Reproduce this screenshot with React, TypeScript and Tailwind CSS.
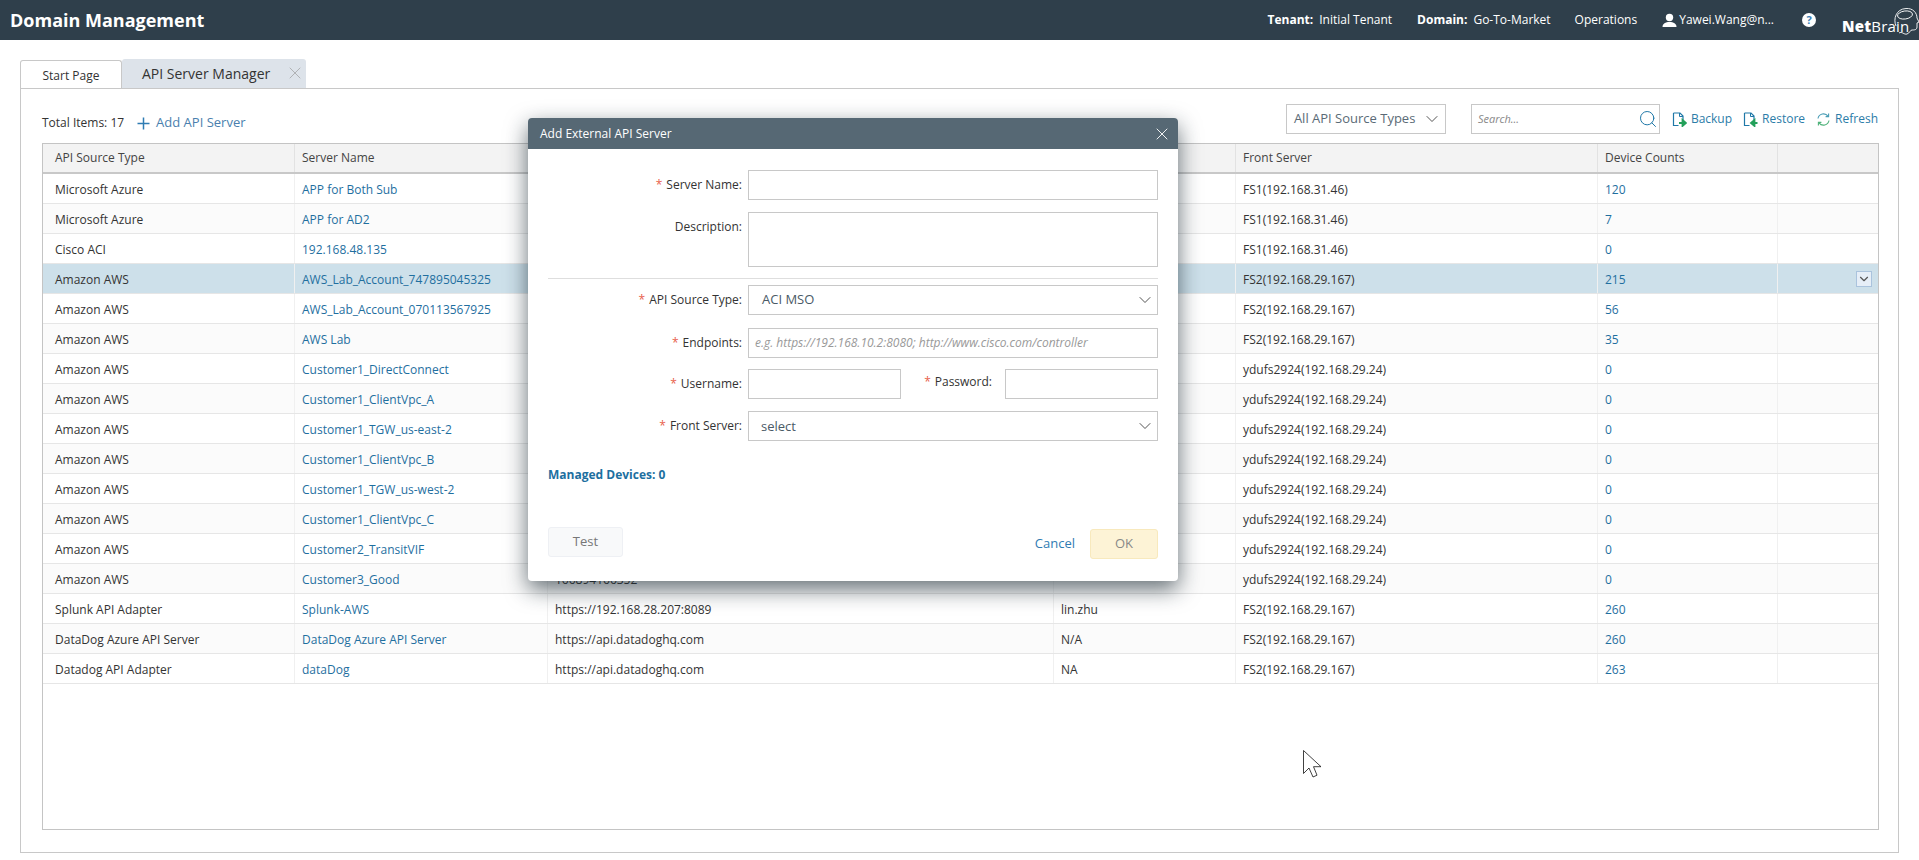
import { ChevronDown, Search, X } from "lucide-react";

const ROWS = [
	["Microsoft Azure", "APP for Both Sub", "", "", "FS1(192.168.31.46)", "120"],
	["Microsoft Azure", "APP for AD2", "", "", "FS1(192.168.31.46)", "7"],
	["Cisco ACI", "192.168.48.135", "", "", "FS1(192.168.31.46)", "0"],
	["Amazon AWS", "AWS_Lab_Account_747895045325", "", "", "FS2(192.168.29.167)", "215"],
	["Amazon AWS", "AWS_Lab_Account_070113567925", "", "", "FS2(192.168.29.167)", "56"],
	["Amazon AWS", "AWS Lab", "", "", "FS2(192.168.29.167)", "35"],
	["Amazon AWS", "Customer1_DirectConnect", "", "", "ydufs2924(192.168.29.24)", "0"],
	["Amazon AWS", "Customer1_ClientVpc_A", "", "", "ydufs2924(192.168.29.24)", "0"],
	["Amazon AWS", "Customer1_TGW_us-east-2", "", "", "ydufs2924(192.168.29.24)", "0"],
	["Amazon AWS", "Customer1_ClientVpc_B", "", "", "ydufs2924(192.168.29.24)", "0"],
	["Amazon AWS", "Customer1_TGW_us-west-2", "", "", "ydufs2924(192.168.29.24)", "0"],
	["Amazon AWS", "Customer1_ClientVpc_C", "", "", "ydufs2924(192.168.29.24)", "0"],
	["Amazon AWS", "Customer2_TransitVIF", "", "", "ydufs2924(192.168.29.24)", "0"],
	["Amazon AWS", "Customer3_Good", "166894166352", "", "ydufs2924(192.168.29.24)", "0"],
	["Splunk API Adapter", "Splunk-AWS", "https://192.168.28.207:8089", "lin.zhu", "FS2(192.168.29.167)", "260"],
	["DataDog Azure API Server", "DataDog Azure API Server", "https://api.datadoghq.com", "N/A", "FS2(192.168.29.167)", "260"],
	["Datadog API Adapter", "dataDog", "https://api.datadoghq.com", "NA", "FS2(192.168.29.167)", "263"],
];

function FileArrow({ back }: { back?: boolean }) {
	return (
		<svg width="15" height="15" viewBox="0 0 15 15" fill="none">
			<path d="M1.5 1h6.5l3 3v4M1.5 1v12.5h5" stroke="#1f78a8" strokeWidth="1.2" />
			<path d="M7.5 1v3.5H11" stroke="#1f78a8" strokeWidth="1" />
			{back ? (
				<path d="M14.5 11H10M11.5 8 8 11l3.5 3z" stroke="#23a05a" strokeWidth="1.8" fill="#23a05a" />
			) : (
				<path d="M7 11h4M10.5 8l3.5 3-3.5 3z" stroke="#23a05a" strokeWidth="1.8" fill="#23a05a" />
			)}
		</svg>
	);
}

function RefreshIcon() {
	return (
		<svg width="15" height="15" viewBox="0 0 15 15" fill="none" strokeWidth="1.1">
			<path d="M2 6.5A5.6 5.6 0 0 1 12 4.2" stroke="#4a9db5" />
			<path d="M12.6 1.6v3h-3" stroke="#4a9db5" />
			<path d="M13 8.5A5.6 5.6 0 0 1 3 10.8" stroke="#4fb27a" />
			<path d="M2.4 13.4v-3h3" stroke="#4fb27a" />
		</svg>
	);
}

function Label({ text, required = true, className = "" }: { text: string; required?: boolean; className?: string }) {
	return (
		<span className={`text-[12px] text-[#333] whitespace-nowrap ${className}`}>
			{required && <span className="text-[#e8604c] mr-1">*</span>}
			{text}
		</span>
	);
}

function Field({ label, required, children, className = "" }: { label: string; required?: boolean; children: React.ReactNode; className?: string }) {
	return (
		<div className={`flex items-center ${className}`}>
			<div className="w-[200px] text-right pr-[6px] pb-[4px] shrink-0">
				<Label text={label} required={required} />
			</div>
			{children}
		</div>
	);
}

function Modal() {
	return (
		<div className="absolute left-[528px] top-[118px] w-[650px] h-[463px] bg-white rounded-[4px] shadow-[0_8px_22px_rgba(20,35,45,0.65)]">
			<div className="h-[31px] bg-[#566874] rounded-t-[4px] flex items-center justify-between pl-[12px] pr-[6px] text-white text-[12px]">
				<span>Add External API Server</span>
				<X size={20} strokeWidth={1.1} />
			</div>
			<div className="px-[20px] pt-[21px]">
				<Field label="Server Name:">
					<div className="w-[410px] h-[30px] border border-[#c8c8c8]" />
				</Field>
				<div className="flex mt-[12px] h-[55px]">
					<div className="w-[200px] text-right pr-[6px] shrink-0 pt-[1px]">
						<Label text="Description:" required={false} />
					</div>
					<div className="w-[410px] border border-[#c8c8c8]" />
				</div>
				<div className="h-px bg-[#dedede] mt-[11px] w-[610px]" />
				<Field label="API Source Type:" className="mt-[6px]">
					<div className="w-[410px] h-[30px] border border-[#c8c8c8] flex items-center justify-between pl-[13px] pr-[2px] text-[13px] text-[#4a5a66]">
						ACI MSO
						<ChevronDown size={20} strokeWidth={1.1} className="text-[#444]" />
					</div>
				</Field>
				<Field label="Endpoints:" className="mt-[13px]">
					<div className="w-[410px] h-[30px] border border-[#c8c8c8] flex items-center pl-[6px] text-[12px] italic text-[#999]">
						e.g. https://192.168.10.2:8080; http://www.cisco.com/controller
					</div>
				</Field>
				<div className="flex mt-[11px]">
					<Field label="Username:">
						<div className="w-[153px] h-[30px] border border-[#c8c8c8]" />
					</Field>
					<div className="w-[104px] text-right pr-[13px] shrink-0 -mt-[1px]">
						<Label text="Password:" />
					</div>
					<div className="w-[153px] h-[30px] border border-[#c8c8c8]" />
				</div>
				<Field label="Front Server:" className="mt-[12px]">
					<div className="w-[410px] h-[30px] border border-[#c8c8c8] flex items-center justify-between pl-[12px] pr-[2px] text-[13px] text-[#4a5a66]">
						<span className="pt-[2px]">select</span>
						<ChevronDown size={20} strokeWidth={1.1} className="text-[#444]" />
					</div>
				</Field>
				<div className="mt-[26px] text-[12px] font-bold text-[#1d6f9f] leading-[16px]">Managed Devices: 0</div>
				<div className="flex items-start mt-[44px]">
					<div className="w-[75px] h-[30px] bg-[#f8f9fa] border border-[#eef0f4] rounded-[3px] flex items-center justify-center text-[13px] text-[#777]">
						Test
					</div>
					<div className="flex-1 flex items-center justify-end mt-[2px]">
						<span className="text-[13px] text-[#2f7cb3] mr-[15px]">Cancel</span>
						<div className="w-[68px] h-[30px] bg-[#fdf3d6] border border-[#f8e9bd] rounded-[3px] flex items-center justify-center text-[13px] text-[#888]">
							OK
						</div>
					</div>
				</div>
			</div>
		</div>
	);
}

const HEAD_CELL = "px-[7px] flex items-center border-r border-[#e2e2e2] h-full whitespace-nowrap";
const CELL = "px-[7px] pt-[3px] flex items-center border-r border-[#f0f0f0] h-full overflow-hidden whitespace-nowrap";

function Table() {
	return (
		<div className="ml-[21px] mr-[19px] mt-[9px] h-[687px] border border-[#c4c4c4]">
			<div className="grid grid-cols-[252px_253px_506px_182px_362px_180px_1fr] h-[30px] bg-[#f3f3f3] border-b-2 border-[#c8c8c8] text-[12px] text-[#444]">
				<div className={`${HEAD_CELL} pl-[12px]`}>API Source Type</div>
				<div className={HEAD_CELL}>Server Name</div>
				<div className={HEAD_CELL} />
				<div className={HEAD_CELL} />
				<div className={HEAD_CELL}>Front Server</div>
				<div className={HEAD_CELL}>Device Counts</div>
				<div />
			</div>
			{ROWS.map((r, i) => (
				<div
					key={i}
					className={`grid grid-cols-[252px_253px_506px_182px_362px_180px_1fr] h-[30px] border-b border-[#e6e6e6] text-[12px] text-[#333] ${
						i === 3 ? "bg-[#cde0ea]" : i % 2 === 1 ? "bg-[#fbfbfb]" : "bg-white"
					}`}
				>
					<div className={`${CELL} pl-[12px]`}>{r[0]}</div>
					<div className={`${CELL} text-[#1f6f9f]`}>{r[1]}</div>
					<div className={CELL}>{r[2]}</div>
					<div className={CELL}>{r[3]}</div>
					<div className={CELL}>{r[4]}</div>
					<div className={`${CELL} text-[#1f6f9f]`}>{r[5]}</div>
					<div className="flex items-center justify-end pr-[6px]">
						{i === 3 && (
							<div className="w-[16px] h-[16px] bg-[#e6eef7] border border-[#aac3dd] flex items-center justify-center">
								<ChevronDown size={14} strokeWidth={2} className="text-[#555] shrink-0" />
							</div>
						)}
					</div>
				</div>
			))}
		</div>
	);
}

export default function App() {
	return (
		<div className="relative w-[1919px] h-[860px] overflow-hidden bg-white font-['Open_Sans',sans-serif]">
			<header className="h-[40px] bg-[#2f3f4b] flex items-center text-white text-[12px]">
				<div className="pl-[10px] text-[18px] font-bold">Domain Management</div>
				<div className="ml-auto flex items-center h-full">
					<span className="font-bold mr-[6px]">Tenant:</span>
					<span className="mr-[25px]">Initial Tenant</span>
					<span className="font-bold mr-[6px]">Domain:</span>
					<span className="mr-[24px]">Go-To-Market</span>
					<span className="mr-[25px]">Operations</span>
					<svg width="15" height="15" viewBox="0 0 15 15" fill="white" className="mr-[2px]">
						<circle cx="7.5" cy="4.5" r="3.7" />
						<path d="M0.5 14c0-3.5 3-5 7-5s7 1.5 7 5z" />
					</svg>
					<span className="mr-[28px]">Yawei.Wang@n...</span>
					<div className="w-[14px] h-[14px] rounded-full bg-white text-[#3b7fb5] text-[11px] font-bold flex items-center justify-center mr-[26px]">?</div>
					<div className="relative w-[77px] h-full">
						<span className="absolute left-0 top-[17px] text-[15px] leading-[18px] tracking-[0.2px]">
							<span className="font-extrabold">Net</span>Brain
						</span>
						<svg width="29" height="30" viewBox="0 0 29 30" fill="none" stroke="white" strokeWidth="0.9" className="absolute left-[48px] top-[6px]">
							<path d="M6 20C3 13 6 3 16 2.5c7-.5 11 4.5 11 9.5l2 4-2 1v4c0 3-3 3-5 3s-2 3-5 4-5-3-8-1" />
							<ellipse cx="15" cy="9" rx="7.5" ry="4" transform="rotate(-8 15 9)" />
						</svg>
					</div>
				</div>
			</header>

			<div className="flex items-end h-[48px] pl-[20px]">
				<div className="w-[102px] h-[28px] pt-[2px] bg-white border border-b-0 border-[#c8c8c8] rounded-t-[3px] flex items-center justify-center text-[12px] text-[#333]">
					Start Page
				</div>
				<div className="w-[184px] h-[29px] pb-[1px] bg-[#dde3ea] rounded-t-[3px] flex items-center pl-[20px] text-[14px] text-[#333]">
					API Server Manager
					<X size={20} strokeWidth={0.8} className="ml-[15px] text-[#999]" />
				</div>
			</div>

			<main className="mx-[20px] h-[765px] border border-[#c8c8c8]">
				<div className="flex items-center h-[30px] mt-[15px] pl-[21px] pr-[20px]">
					<span className="text-[12px] text-[#333] pt-[7px]">Total Items: 17</span>
					<svg width="13" height="13" viewBox="0 0 13 13" className="ml-[13px] mt-[8px]" stroke="#2f7cb3" strokeWidth="1.5">
						<path d="M6.5 0.5v12M0.5 6.5h12" />
					</svg>
					<span className="ml-[6px] text-[13px] text-[#4a7fae] pt-[7px]">Add API Server</span>
					<div className="ml-auto w-[160px] h-[30px] border border-[#c8c8c8] flex items-center justify-between pl-[7px] pr-[3px] text-[13px] text-[#5a6a76]">
						All API Source Types
						<ChevronDown size={20} strokeWidth={1.1} className="text-[#444]" />
					</div>
					<div className="ml-[25px] w-[189px] h-[30px] border border-[#c8c8c8] flex items-center justify-between pl-[6px] pr-[1px] text-[11px] italic text-[#888]">
						Search...
						<Search size={20} strokeWidth={1.2} className="text-[#1f78a8]" />
					</div>
					<div className="ml-[12px] flex items-center text-[12px] text-[#2b7ca8]">
						<FileArrow />
						<span className="ml-[4px]">Backup</span>
						<span className="ml-[11px]"><FileArrow back /></span>
						<span className="ml-[4px]">Restore</span>
						<span className="ml-[11px]"><RefreshIcon /></span>
						<span className="ml-[4px]">Refresh</span>
					</div>
				</div>
				<Table />
			</main>

			<Modal />

			<svg width="20" height="29" viewBox="0 0 20 29" className="absolute left-[1303px] top-[750px]" fill="white" stroke="#111" strokeWidth="0.8">
				<path d="M0.5 0.5V23.5L6 18l4 9 4-1.8-3.5-8.5H18z" />
			</svg>
		</div>
	);
}
